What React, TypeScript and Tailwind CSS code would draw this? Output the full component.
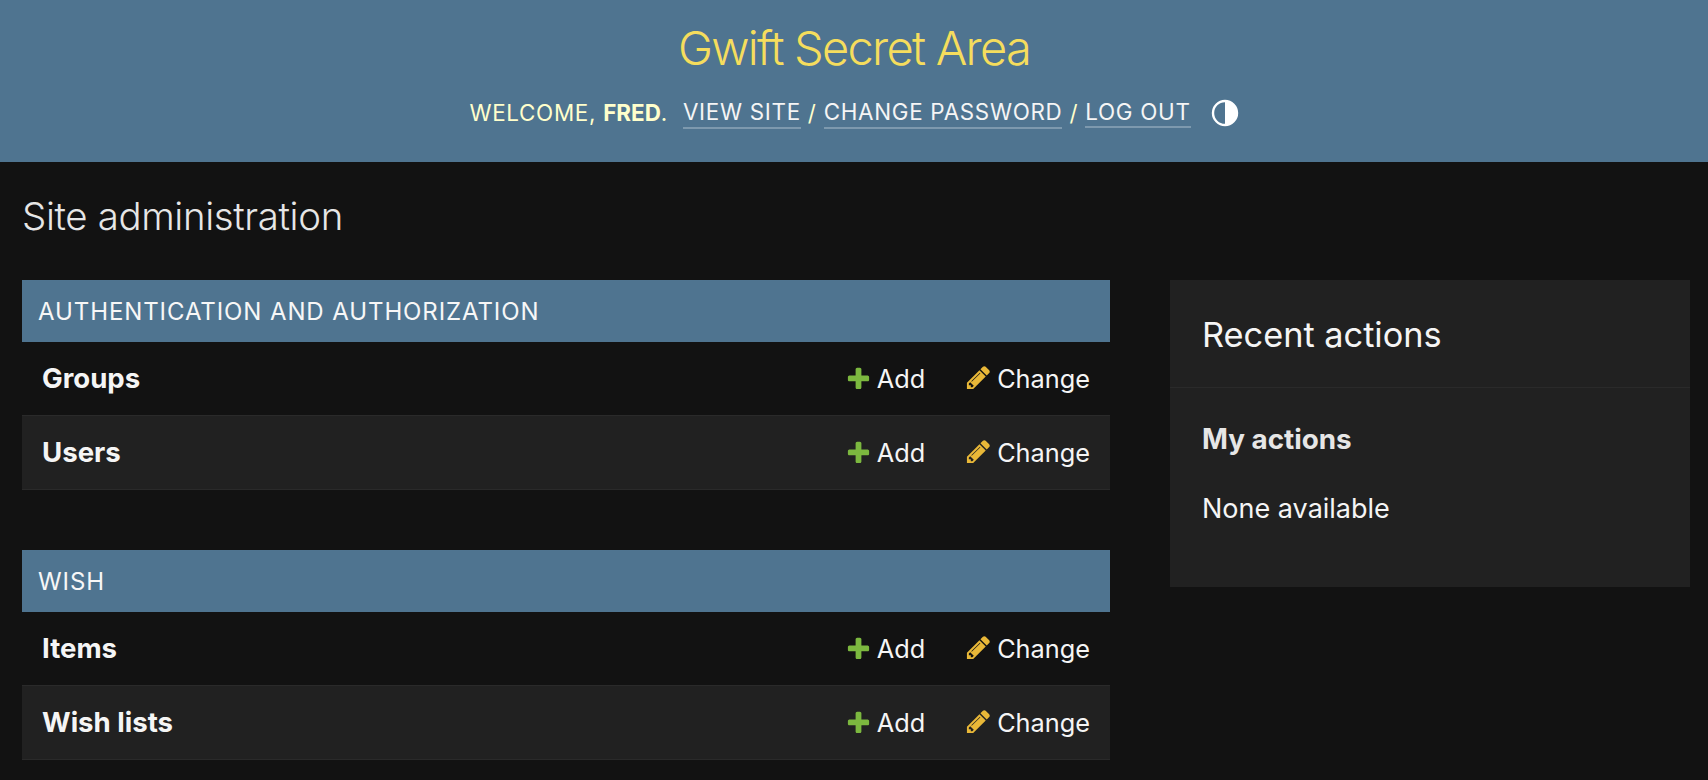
const font = "font-['Inter',sans-serif]";

function Plus() {
  return (
    <svg width="27" height="27" viewBox="0 0 1792 1792" className="shrink-0">
      <path fill="#7cb83f" d="M1600 796v192q0 40-28 68t-68 28h-416v416q0 40-28 68t-68 28h-192q-40 0-68-28t-28-68v-416h-416q-40 0-68-28t-28-68v-192q0-40 28-68t68-28h416v-416q0-40 28-68t68-28h192q40 0 68 28t28 68v416h416q40 0 68 28t28 68z" />
    </svg>
  );
}

function Pencil() {
  return (
    <svg width="27" height="27" viewBox="0 0 1792 1792" className="-mt-[2px] shrink-0">
      <path fill="#e9b838" d="M491 1536l91-91-235-235-91 91v107h128v128h107zm523-928q0-22-22-22-10 0-17 7l-542 542q-7 7-7 17 0 22 22 22 10 0 17-7l542-542q7-7 7-17zm-54-192l416 416-832 832h-416v-416zm683 96q0 53-37 90l-166 166-416-416 166-165q36-38 90-38 53 0 91 38l235 234q37 39 37 91z" />
    </svg>
  );
}

function Row({ name, alt }: { name: string; alt?: boolean }) {
  return (
    <div className={`flex h-[74px] items-center justify-between border-b border-[#2a2a2a] pl-[20px] pr-[20px] ${alt ? "bg-[#212121]" : "bg-[#121212]"}`}>
      <span className="text-[27.6px] font-bold text-[#f5f5f5]">{name}</span>
      <div className="flex items-center text-[25.3px] text-[#f5f5f5]">
        <span className="flex items-center gap-[5px]"><Plus />Add</span>
        <span className="ml-[40px] flex items-center gap-[5px]"><Pencil />Change</span>
      </div>
    </div>
  );
}

function Module({ title, rows }: { title: string; rows: string[] }) {
  return (
    <section className="mb-[60px]">
      <div className="flex h-[62px] items-center bg-[#4f7490] px-[16px] pt-[2px] text-[24px] tracking-[0.9px] text-[#f7f7f7] uppercase">{title}</div>
      {rows.map((r, i) => <Row key={r} name={r} alt={i % 2 === 1} />)}
    </section>
  );
}

export default function App() {
  return (
    <div className={`h-[780px] overflow-hidden bg-[#121212] ${font}`}>
      <header className="flex h-[162px] flex-col items-center bg-[#4f7490]">
        <h1 className="mt-[18px] text-[47px] leading-[60px] font-light tracking-[-1.75px] text-[#f5dd5d]">Gwift Secret Area</h1>
        <div className="mt-[19px] flex items-center text-[22.4px] leading-[30px] tracking-[0.7px] text-[#ffffcc] uppercase">
          <span>Welcome, <strong className="font-bold tracking-[0px]">Fred</strong>.</span>
          <a className="ml-[15px] border-b-2 border-[#7d99ae] text-[#f5f5f5]">View site</a>
          <span className="mx-[7px]">/</span>
          <a className="border-b-2 border-[#7d99ae] text-[#f5f5f5]">Change password</a>
          <span className="mx-[7px]">/</span>
          <a className="border-b-2 border-[#7d99ae] leading-[28px] text-[#f5f5f5]">Log out</a>
          <svg width="28" height="28" viewBox="0 0 28 28" className="ml-[20px]">
            <circle cx="14" cy="14" r="12" fill="none" stroke="#fff" strokeWidth="2.4" />
            <path d="M14 2a12 12 0 0 1 0 24z" fill="#fff" />
          </svg>
        </div>
      </header>
      <main className="pl-[22px] pr-[18px]">
        <h2 className="pt-[31px] pb-[41px] text-[38.4px] leading-[46px] font-light tracking-[-0.35px] text-[#e6e6e6]">Site administration</h2>
        <div className="flex items-start gap-[60px]">
          <div className="w-[1088px] shrink-0">
            <Module title="Authentication and Authorization" rows={["Groups", "Users"]} />
            <Module title="Wish" rows={["Items", "Wish lists"]} />
          </div>
          <aside className="h-[307px] flex-1 bg-[#212121]">
            <div className="flex h-[108px] items-center border-b border-[#2a2a2a] px-[32px] pt-[2px] text-[34.3px] text-[#f5f5f5]">Recent actions</div>
            <div className="px-[32px] pt-[32px] text-[#f5f5f5]">
              <h3 className="text-[27.8px] leading-[38px] font-bold text-[#e6e6e6]">My actions</h3>
              <p className="mt-[32px] text-[27px] leading-[38px]">None available</p>
            </div>
          </aside>
        </div>
      </main>
    </div>
  );
}
